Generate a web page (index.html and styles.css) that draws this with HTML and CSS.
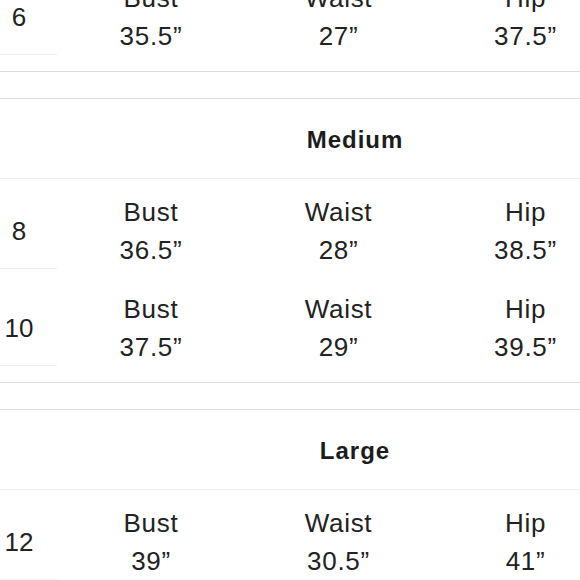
FILE: index.html
```html
<!DOCTYPE html>
<html lang="en">
<head>
<meta charset="utf-8">
<title>Size chart</title>
<link rel="stylesheet" href="styles.css">
</head>
<body>
<div class="wrap">
  <div class="sheet">
    <div class="rows">
      <div class="row">
        <div class="size">6</div>
        <div class="measure"><span>Bust</span><span>35.5”</span></div>
        <div class="measure"><span>Waist</span><span>27”</span></div>
        <div class="measure"><span>Hip</span><span>37.5”</span></div>
      </div>
    </div>
    <div class="band"></div>

    <section class="group">
      <h2 class="group-title">Medium</h2>
      <div class="rows">
        <div class="row">
          <div class="size">8</div>
          <div class="measure"><span>Bust</span><span>36.5”</span></div>
          <div class="measure"><span>Waist</span><span>28”</span></div>
          <div class="measure"><span>Hip</span><span>38.5”</span></div>
        </div>
        <div class="row">
          <div class="size">10</div>
          <div class="measure"><span>Bust</span><span>37.5”</span></div>
          <div class="measure"><span>Waist</span><span>29”</span></div>
          <div class="measure"><span>Hip</span><span>39.5”</span></div>
        </div>
      </div>
    </section>
    <div class="band"></div>

    <section class="group">
      <h2 class="group-title">Large</h2>
      <div class="rows">
        <div class="row">
          <div class="size">12</div>
          <div class="measure"><span>Bust</span><span>39”</span></div>
          <div class="measure"><span>Waist</span><span>30.5”</span></div>
          <div class="measure"><span>Hip</span><span>41”</span></div>
        </div>
      </div>
    </section>
  </div>
</div>
</body>
</html>
```

FILE: styles.css
```css
html, body {
  margin: 0;
  padding: 0;
  background: #ffffff;
}

body {
  font-family: "Liberation Sans", Arial, sans-serif;
  color: #222222;
}

.wrap {
  width: 580px;
  height: 580px;
  overflow: hidden;
}

.sheet {
  margin-top: -21px;
}

.rows {
  display: flex;
  flex-direction: column;
}

.row {
  display: grid;
  grid-template-columns: 57px 188px 187px 187px;
  padding-top: 14px;
  font-size: 26px;
  line-height: 38px;
  letter-spacing: 0.7px;
}

.sheet > .rows .row:first-child {
  padding-top: 0;
}

.row + .row {
  padding-top: 21px;
}

.size {
  display: flex;
  align-items: center;
  justify-content: center;
  padding-right: 19px;
  border-bottom: 1px solid #efefef;
  letter-spacing: 0;
}

.measure {
  display: flex;
  flex-direction: column;
  align-items: center;
}

.band {
  margin-top: 16px;
  height: 26px;
  border-top: 1px solid #dcdcdc;
  border-bottom: 1px solid #dcdcdc;
}

.group-title {
  margin: 0;
  height: 80px;
  display: flex;
  align-items: center;
  justify-content: center;
  padding-left: 130px;
  padding-top: 2px;
  box-sizing: border-box;
  font-size: 24px;
  font-weight: 700;
  letter-spacing: 1px;
  color: #1c1c1c;
  border-bottom: 1px solid #efefef;
}
```
